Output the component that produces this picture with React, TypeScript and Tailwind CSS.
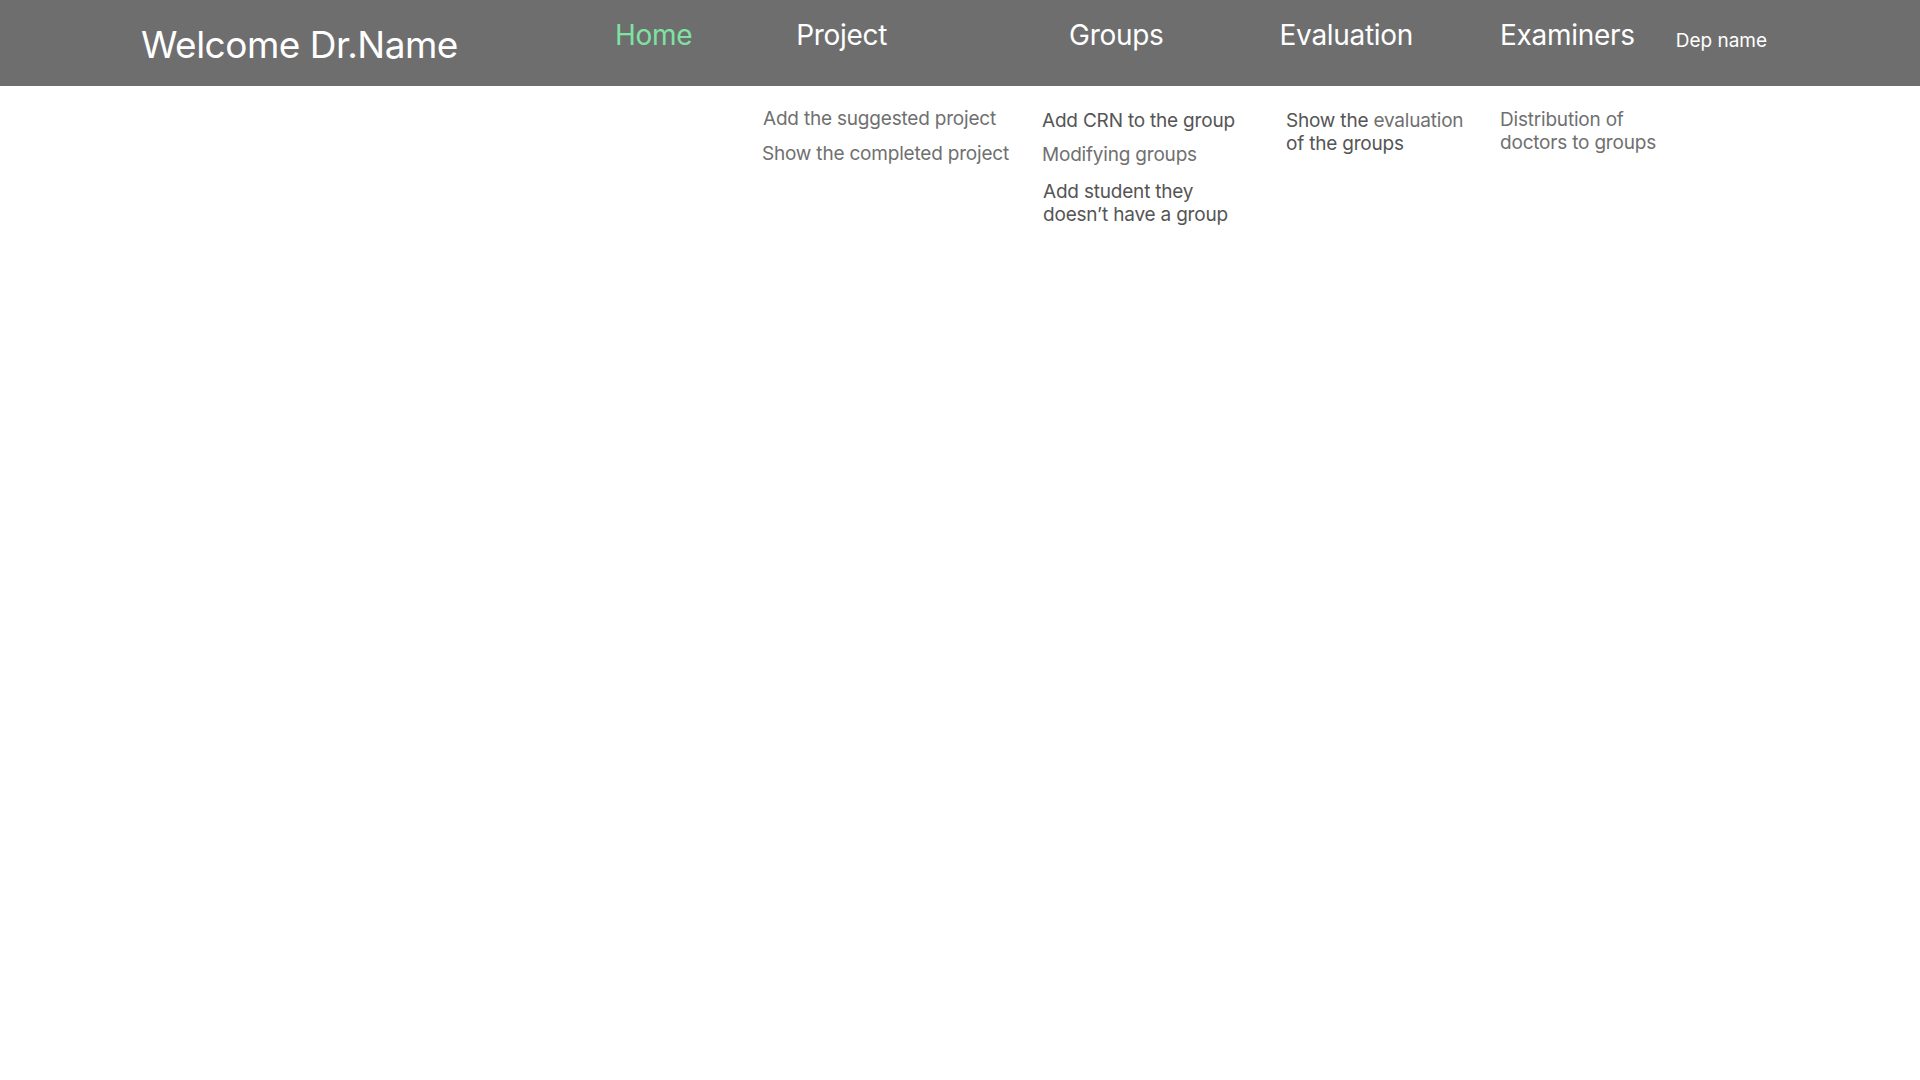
const navItems = [
  { label: 'Home', cls: 'ml-[157px] text-[#7ee3a2]' },
  { label: 'Project', cls: 'ml-[104px] text-white' },
  { label: 'Groups', cls: 'ml-[182px] text-white' },
  { label: 'Evaluation', cls: 'ml-[116px] text-white' },
  { label: 'Examiners', cls: 'ml-[87px] text-white' },
];

export default function App() {
  return (
    <div className="min-h-screen bg-white font-['Inter',sans-serif]">
      {/* Top bar */}
      <header className="flex h-[86px] items-start bg-[#6e6e6e]">
        <h1 className="ml-[141px] mt-[21px] text-[37px] leading-[48px] tracking-[-0.5px] text-white">
          Welcome Dr.Name
        </h1>
        {navItems.map((item) => (
          <a
            key={item.label}
            href="#"
            className={`mt-[18px] text-[28px] leading-[34px] tracking-[-0.3px] ${item.cls}`}
          >
            {item.label}
          </a>
        ))}
        <span className="ml-[41px] mt-[29px] text-[19px] leading-[24px] text-white">Dep name</span>
      </header>

      {/* Sub menus */}
      <div className="flex pl-[762px] pt-[21px] text-[19px] leading-[23px] tracking-[-0.2px]">
        <ul className="flex w-[280px] flex-col gap-[12px] text-[#707070]">
          <li className="pl-[1px]">Add the suggested project</li>
          <li>Show the completed project</li>
        </ul>
        <ul className="flex w-[244px] flex-col gap-[11px] pt-[2px]">
          <li className="text-[#555555]">Add CRN to the group</li>
          <li className="text-[#707070]">Modifying groups</li>
          <li className="pt-[3px] pl-[1px] text-[#555555]">
            Add student they
            <br />
            doesn’t have a group
          </li>
        </ul>
        <div className="w-[214px] pt-[2px]">
          <p className="text-[#555555]">
            Show the <span className="text-[#707070]">evaluation</span>
            <br />
            of the groups
          </p>
        </div>
        <div className="pt-[1px] text-[#707070]">
          <p>
            Distribution of
            <br />
            doctors to groups
          </p>
        </div>
      </div>
    </div>
  );
}
